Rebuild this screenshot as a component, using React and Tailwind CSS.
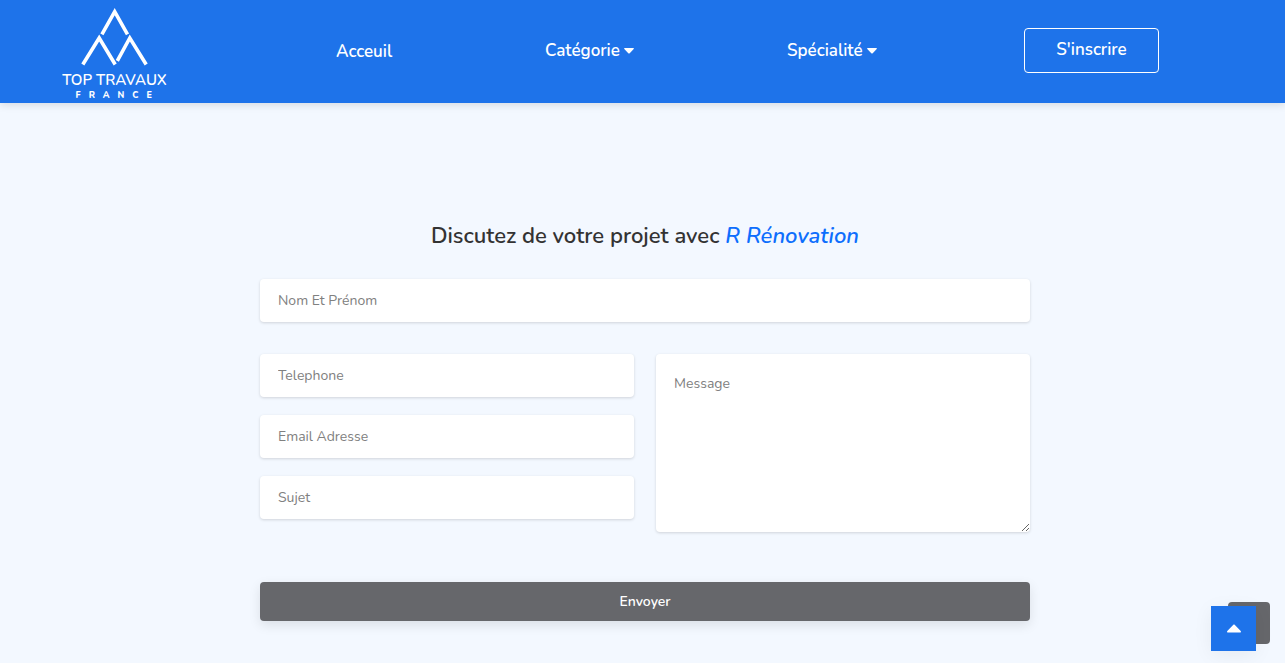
import { FaCaretUp } from "react-icons/fa";

const field =
  "block h-[43px] w-full rounded bg-white px-[18px] text-sm text-[#333] shadow-[0_1px_3px_rgba(0,0,0,0.15)] outline-none placeholder:text-[#808080]";

function Logo() {
  return (
    <a href="#" aria-label="Top Travaux France" className="block w-[106px] text-white">
      <svg viewBox="0 0 106 103" className="block w-full" fill="none">
        <g stroke="currentColor" strokeWidth="3.6">
          <path d="M39.9 34.3 52.7 11.6 65.5 34.3" />
          <path d="M20.8 64.5 37.2 38 53.2 64.5" />
          <path d="M55.3 60.8 67.8 38 84.2 64.5" />
        </g>
        <g fill="currentColor" fontFamily="Nunito, Lato, sans-serif">
          <text x="52.5" y="85" textAnchor="middle" fontSize="15" fontWeight="600">TOP TRAVAUX</text>
          <text x="13.5" y="98" fontSize="9" fontWeight="800" letterSpacing="8">FRANCE</text>
        </g>
      </svg>
    </a>
  );
}

function MenuButton({ children }) {
  return (
    <button type="button" className="flex items-center gap-1 justify-self-start pb-0.5">
      {children}
      <svg viewBox="0 0 10 6" className="w-2.5" fill="currentColor" aria-hidden="true">
        <path d="M0.6 0H9.4Q10.2 0.3 9.7 1.1L5.7 5.3Q5 5.9 4.3 5.3L0.3 1.1Q-0.2 0.3 0.6 0Z" />
      </svg>
    </button>
  );
}

function Field({ label, type = "text" }) {
  return <input type={type} aria-label={label} placeholder={label} className={field} />;
}

export default function App() {
  return (
    <div className="min-h-screen bg-[#f3f8ff] font-['Nunito','Open_Sans',sans-serif] text-[#333]">
      <header className="bg-[#1e73ea] shadow-[0_2px_8px_rgba(0,0,0,0.12)]">
        <nav className="grid grid-cols-[274fr_209fr_242fr_237fr_135px] items-center pr-[126px] pl-[62px] text-[17px] leading-[26px] font-semibold text-white">
          <Logo />
          <a href="#" className="justify-self-start">Acceuil</a>
          <MenuButton>Catégorie</MenuButton>
          <MenuButton>Spécialité</MenuButton>
          <a href="#" className="mb-0.5 h-[45px] rounded border border-white pt-2 text-center">S'inscrire</a>
        </nav>
      </header>

      <main className="pt-[117px] pb-10 pl-[5px]">
        <form className="mx-auto w-full max-w-[770px]">
          <h1 className="text-center text-[22px] leading-8 font-semibold">
            Discutez de votre projet avec <em className="text-[#0d6efd]">R Rénovation</em>
          </h1>
          <div className="mt-[27px]">
            <Field label="Nom Et Prénom" />
          </div>
          <div className="mt-8 grid grid-cols-2 gap-[22px]">
            <div className="flex flex-col gap-[18px]">
              <Field label="Telephone" type="tel" />
              <Field label="Email Adresse" type="email" />
              <Field label="Sujet" />
            </div>
            <textarea
              aria-label="Message"
              placeholder="Message"
              className="block h-[178px] w-full rounded bg-white px-[18px] py-5 text-sm shadow-[0_1px_3px_rgba(0,0,0,0.15)] outline-none placeholder:text-[#808080]"
            />
          </div>
          <button
            type="submit"
            className="mt-[50px] h-[39px] w-full rounded bg-[#66676b] text-sm font-semibold text-white shadow-[0_4px_12px_rgba(0,0,0,0.1)]"
          >
            Envoyer
          </button>
        </form>
      </main>

      <button type="button" aria-label="Options" className="fixed right-[15px] bottom-[19px] size-[42px] rounded bg-[#66676b]" />
      <button
        type="button"
        aria-label="Haut de page"
        className="fixed right-[29px] bottom-3 flex size-[45px] items-center justify-center bg-[#1e73ea] pb-0.5 text-2xl text-white shadow-[0_4px_20px_rgba(0,0,0,0.06)]"
      >
        <FaCaretUp aria-hidden="true" />
      </button>
    </div>
  );
}
